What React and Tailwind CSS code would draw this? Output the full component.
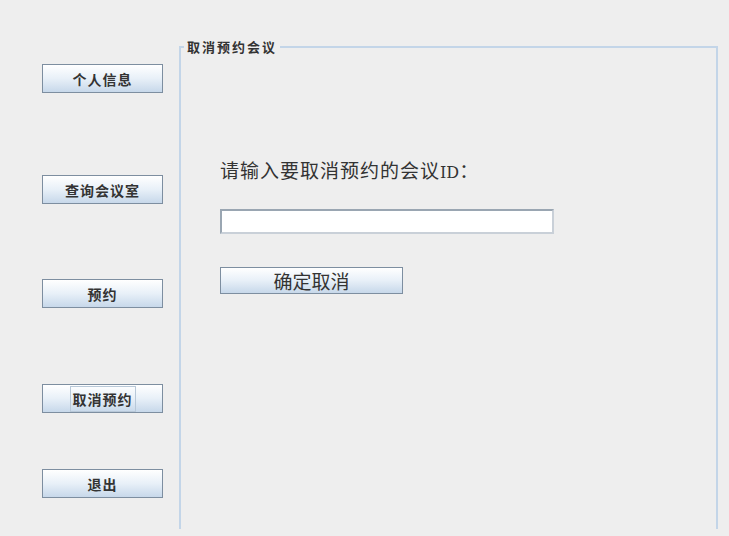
import { useState } from 'react';

const CJK = { fontFamily: '"Noto Sans CJK SC", "Noto Sans", sans-serif' };

const NAV = [
  { label: '个人信息', mt: 'mt-[64px]' },
  { label: '查询会议室', mt: 'mt-[82px]' },
  { label: '预约', mt: 'mt-[75px]' },
  { label: '取消预约', mt: 'mt-[76px]', focused: true },
  { label: '退出', mt: 'mt-[56px]' },
];

function NavButton({ label, mt, focused }) {
  return (
    <button
      className={`${mt} w-[121px] h-[29px] flex items-center justify-center border border-[#7d8ea0]
                  bg-gradient-to-b from-[#ffffff] via-[#e8f0f8] to-[#c7d8ea] text-[14px] font-bold
                  text-[#333333] tracking-[1px] leading-none`}
    >
      <span
        className={`px-[2px] py-[5px] ${focused ? 'border border-[#b8c8d8]' : 'border border-transparent'}`}
      >
        {label}
      </span>
    </button>
  );
}

export default function App() {
  const [meetingId, setMeetingId] = useState('');

  return (
    <div className="w-[729px] h-[536px] bg-[#eeeeee] flex overflow-hidden" style={CJK}>
      {/* left nav */}
      <div className="w-[179px] shrink-0 flex flex-col pl-[42px]">
        {NAV.map(n => (
          <NavButton key={n.label} {...n} />
        ))}
      </div>

      {/* titled panel */}
      <fieldset className="mt-[37px] w-[539px] h-[492px] border-2 border-b-0 border-[#c3d5e8] p-0 m-0">
        <legend className="ml-[3px] px-[3px] text-[13px] font-bold text-[#333333] tracking-[2px] leading-[20px]">
          取消预约会议
        </legend>

        <div className="pl-[39px]">
          <p className="mt-[101px] text-[19px] text-[#333333] tracking-[1px] leading-[24px]">
            请输入要取消预约的会议<span style={{ fontFamily: '"DejaVu Serif", serif' }} className="text-[16px] tracking-normal">ID</span>：
          </p>

          <input
            value={meetingId}
            onChange={e => setMeetingId(e.target.value)}
            className="mt-[24px] block w-[334px] h-[25px] bg-white border-2 border-[#9aa6b2] border-r-[#c9d0d8] border-b-[#c9d0d8] outline-none"
          />

          <button
            className="mt-[33px] w-[183px] h-[27px] flex items-center justify-center border border-[#7d8ea0]
                       bg-gradient-to-b from-[#ffffff] via-[#e8f0f8] to-[#c7d8ea] text-[19px] text-[#333333] leading-none"
          >
            确定取消
          </button>
        </div>
      </fieldset>
    </div>
  );
}
